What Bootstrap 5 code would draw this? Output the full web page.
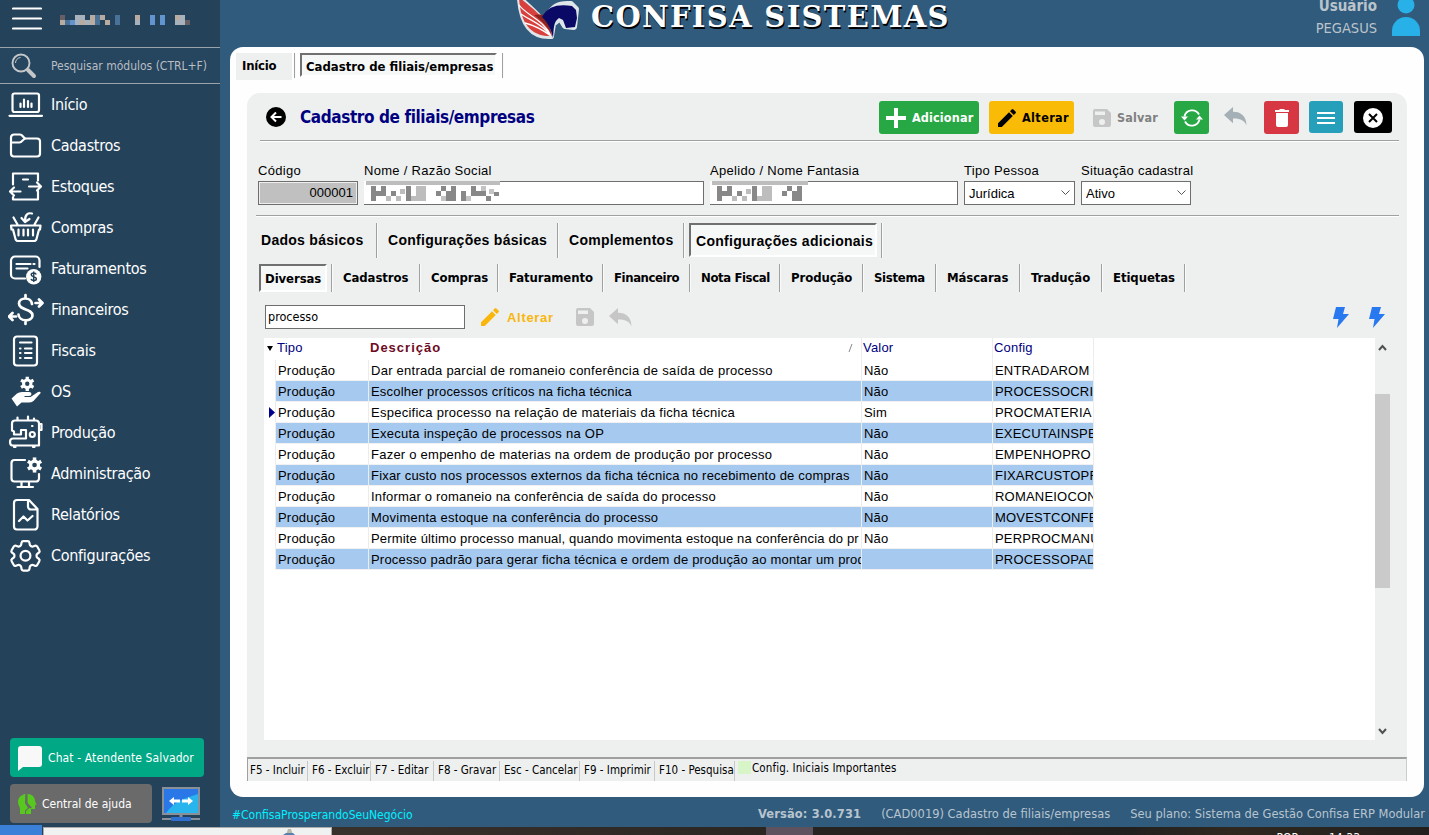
<!DOCTYPE html>
<html lang="pt-BR">
<head>
<meta charset="utf-8">
<meta name="viewport" content="width=device-width, initial-scale=1">
<title>Confisa Sistemas</title>
<link rel="stylesheet" href="https://cdn.jsdelivr.net/npm/bootstrap@5.3.0/dist/css/bootstrap.min.css">
<style>
:root{--tahoma:"DejaVu Sans Condensed","DejaVu Sans",sans-serif;--sans:"Liberation Sans",sans-serif}
body{margin:0;width:1429px;height:835px;overflow:hidden;background:#305b7d;font-family:var(--tahoma);font-stretch:condensed;font-size:12px;line-height:1;color:#000}
svg{display:block;flex:none}
.ln{fill:none;stroke:currentColor;stroke-width:2.2;stroke-linecap:round;stroke-linejoin:round}
.sans{font-family:var(--sans)}
.txt{white-space:nowrap}
/* sidebar */
.side{width:220px;height:835px;background:#24425a;color:#fff}
.side-top{height:48px;border-bottom:1px solid #9aa3a9;padding:2px 0 0 12px}
.side-search{height:36px;border-bottom:1px solid #9aa3a9;color:#b9bec3;padding-left:11px;background:#26455f;font-size:12px}
.side-item{height:41px;padding-left:8px;font-size:16px;letter-spacing:-.3px}
.side-item svg{margin-right:7px}
.side-item span{padding-top:1px}
.blurred-name{margin:13px 0 0 18px}
.side-foot{margin-bottom:12px}
.chat{width:194px;height:39px;margin-left:10px;background:#00a886;border-radius:4px;padding:1px 0 0 8px;font-size:12px;letter-spacing:.12px}
.help{width:142px;height:39px;background:#6a6a6a;border-radius:4px;padding:1px 0 0 8px;font-size:12px}
/* header and footer */
.top{height:47px}
.brand{font-family:"DejaVu Serif",serif;font-stretch:normal;font-weight:bold;font-size:29px;letter-spacing:1.350px;color:#fff;text-shadow:1px 2px 0 #000;margin:3px 0 0 9px}
.foot{height:30px;color:#b8c4ce;font-size:12.750px;padding:5px 4px 0 2px}
/* sheet */
.sheet{margin:0 5px 0 10px;height:750px;background:#fefefe;border-radius:13px;padding:6px 17px 0 6px}
.pane{margin:13px 0 0 11px;height:688px;background:#eef0f0;border-radius:13px 13px 0 0}
.rule{height:2px;background:#a0a0a0;border-bottom:1px solid #fff}
.vs{width:2px;flex:none;background:#a0a0a0;border-right:1px solid #fafafa}
.tabx{font-weight:bold;flex:none;white-space:nowrap}
.tab-on{border:2px solid #fff;border-top-color:#707070;border-left-color:#707070;background:#f6f7f7}
.page-title{color:#000080;font-size:17px;letter-spacing:-.4px;margin:8px 0 0 14px}
.act{border-radius:3px;font-weight:bold;font-size:12.500px;flex:none;height:33px;letter-spacing:.15px;padding-top:1px}
.fld{border:1px solid #6e6e6e;height:24px;background:#fff;font-size:13px;padding:0 4px}
.lab{font-size:13px;height:17px;display:block;letter-spacing:.3px;white-space:nowrap}
.t1{margin:6px 0 0 14px;height:35px;font-size:14px;letter-spacing:.28px}
.t1 .tabx{padding:10px 0 0 10px}
.t2{margin:6px 0 0 12px;height:28px;font-size:13px;letter-spacing:-.08px}
.t2 .tabx{padding:7px 0 0 10px}
/* grid */
.gridbox{margin:9px 16px 0 17px;height:402px;background:#fff}
.dg{table-layout:fixed;border-collapse:separate;border-spacing:0;width:830px;font-family:var(--sans);font-size:13px;letter-spacing:.2px}
.dg td,.dg th{padding:0 0 0 2px;height:21px;white-space:nowrap;overflow:hidden;border-right:1px solid #ececec;border-bottom:1px solid #f1f1f1}
.dg th{height:22px;font-weight:normal;color:#000080;padding:0 0 2px 1px;border-bottom-color:#fff}
.dg th b{color:#6e0a1e;letter-spacing:1px}
.dg tr>:first-child{padding:0}
.dg tbody tr:nth-child(even) td:not(:first-child){background:#a6c9ef}
.dg td:first-child{border-bottom-color:#fff}
.dg thead th:nth-child(-n+2){border-right-color:#fff}
.sb{width:16px;background:#eef0f0;padding:6px 0 5px}
.thumb{width:15px;height:194px;background:#cacaca;margin-top:43px}
.status{border-top:2px solid #a0a0a0;border-left:1px solid #a0a0a0;border-right:1px solid #ccc;height:24px;font-size:11.500px}
.status .cellx{border-right:1px solid #c8c8c8;margin-top:2px;flex:none;overflow:hidden;white-space:nowrap;padding:4px 0 0 4px}
.taskbar{left:0;bottom:0;width:1429px;height:10px;overflow:hidden}
.tray{height:8px;color:#fff;font-size:12px;padding:5px 69px 0 0;gap:30px;background:linear-gradient(90deg,#38302b 0,#2c2622 434px,#5d525d 434px,#5d525d 481px,#262321 481px,#22201f 800px,#30281f 900px,#221f1e)}
</style>
</head>
<body class="d-flex position-relative">
<svg width="0" height="0" class="position-absolute">
<symbol id="cog" viewBox="0 0 14 14"><path d="M7 0v14M1 3.500l12 7M1 10.500l12-7" stroke="#fff" stroke-width="3.200"/><circle cx="7" cy="7" r="5" fill="#fff"/><circle cx="7" cy="7" r="2.100" fill="#24425a"/></symbol>
<symbol id="undo" viewBox="0 0 23 19"><path d="M9 0v4.800c8.500 0 13 4.500 13.500 13.500-2-4.800-6-7-13.500-6.800v4.800L0 8z" fill="currentColor"/></symbol>
<symbol id="disk" viewBox="0 0 18 18"><path fill-rule="evenodd" d="M2 0h12l4 4v12a2 2 0 0 1-2 2H2a2 2 0 0 1-2-2V2a2 2 0 0 1 2-2zm0 2.500v3.500h10V2.500zM9 10a3 3 0 1 0 0 6 3 3 0 0 0 0-6z" fill="currentColor"/></symbol>
<symbol id="pencil" viewBox="0 0 18 18"><path d="M0 14.200 11 3.200l3.800 3.800-11 11H0zM12 2.200 13.700.5a1.200 1.200 0 0 1 1.700 0l2.100 2.100a1.200 1.200 0 0 1 0 1.700L15.800 6z" fill="currentColor"/></symbol>
<symbol id="bolt" viewBox="0 0 16 21"><path d="M3 0h9l-2 7h6L4 21l1.500-9H0z" fill="#2878f0"/></symbol>
</svg>

<nav class="side d-flex flex-column flex-shrink-0">
  <div class="side-top d-flex align-items-start">
    <svg width="30" height="34" viewBox="0 0 30 34"><path class="ln" d="M1 6.500h28M1 16.500h28M1 26.500h28"/></svg>
    <svg class="blurred-name" width="132" height="10"><path fill="#675f66" d="M0 0h5v5H0zM125 5h5v5h-5z"/><path fill="#b9ab9f" d="M0 5h5v5H0zM20 5h10v5H20zM30 0h5v10h-5zM40 0h5v5h-5zM45 5h5v5h-5zM75 0h5v5h-5zM115 0h5v5h-5z"/><path fill="#4a7298" d="M5 5h5v5H5zM35 0h5v10h-5zM55 0h5v10h-5z"/><path fill="#6295cf" d="M10 5h5v5h-5zM90 0h5v10h-5zM100 0h5v10h-5z"/><path fill="#a8b2bc" d="M15 0h10v5H15zM15 5h5v5h-5zM25 5h5v5h-5zM75 5h5v5h-5zM115 5h5v5h-5zM120 0h5v10h-5z"/></svg>
  </div>
  <div class="side-search d-flex align-items-center">
    <svg width="26" height="26" viewBox="0 0 26 26" fill="none" stroke="#c4c7c9"><circle cx="10" cy="10" r="8.500" stroke-width="1.900"/><path d="M4.500 10a5.500 5.500 0 0 1 5-5.500" stroke-width="1"/><path d="m17 17 6 6" stroke-width="4" stroke-linecap="round"/></svg>
    <span class="txt" style="margin-left:14px">Pesquisar módulos (CTRL+F)</span>
  </div>
  <div class="side-item d-flex align-items-center"><svg width="36" height="36"><g class="ln"><rect x="4.500" y="6.500" width="26.500" height="18.500" rx="2"/><path d="M1.500 28.800h32.500"/><path d="M12.500 20v-3.500M16 20v-7.500M20 20v-6M23.500 20v-3.500"/></g></svg><span>Início</span></div>
  <div class="side-item d-flex align-items-center"><svg width="36" height="36"><path class="ln" d="M3 9.500a3 3 0 0 1 3-3h6c3 0 3 4 6 4h11a3 3 0 0 1 3 3v12a3 3 0 0 1-3 3H6a3 3 0 0 1-3-3zM3.500 14.500h8c3 0 3-4 6.500-4"/></svg><span>Cadastros</span></div>
  <div class="side-item d-flex align-items-center"><svg width="36" height="36"><path class="ln" d="M5 15.500v-11h25v7M30 22v8.500H5V28M15 10.500h5M21 17.500h11.500M29 13.500l4 4-4 4M12.500 22.500H2.500M6 18.500l-4 4 4 4"/></svg><span>Estoques</span></div>
  <div class="side-item d-flex align-items-center"><svg width="36" height="36"><path class="ln" d="M3 15.500h29.500M3 15.500l.5 4 1.500 0 2.500 9.500q.5 2 2.500 2h16q2 0 2.500-2L31 19.500h1l.5-4M5.500 7.500l4 7M30.500 7.500l-4 7M10.500 19.500v6M15.500 19.500v6M20 19.500v6M25 19.500v6M24 3.500c-4-1-7 1-7 7M13.500 8l3.500 4 4.500-3"/></svg><span>Compras</span></div>
  <div class="side-item d-flex align-items-center"><svg width="36" height="36"><path class="ln" d="M17 27.500H7a4 4 0 0 1-4-4V9.500a4 4 0 0 1 4-4h20.500a4 4 0 0 1 4 4V16M8.500 13h14M8.500 17.500h11M25.500 13h1"/><circle cx="25.700" cy="25.700" r="7.700" fill="#fff"/><path d="M28.200 23.500c-.6-2-5-2-5 .2 0 2.500 5.200 1.500 5.200 4.100 0 2.400-4.800 2.300-5.400.1M25.700 20.500v10.500" fill="none" stroke="#24425a" stroke-width="1.500"/></svg><span>Faturamentos</span></div>
  <div class="side-item d-flex align-items-center"><svg width="36" height="36"><path class="ln" style="stroke-width:2.700" d="M24 12c-.7-7.500-13-7-13-.5 0 7 13.500 5 13.500 12 0 6.500-13.500 6.500-14-1M17.500 3v3M17.500 29.500v2.500M27.500 11h6M31 7.500l3.500 3.500-3.500 3.500M8 24.500H1.500M4.500 21l-3.500 3.500L4.500 28"/></svg><span>Financeiros</span></div>
  <div class="side-item d-flex align-items-center"><svg width="36" height="36"><path class="ln" d="M9 3.500h17a3 3 0 0 1 3 3v23a3 3 0 0 1-3 3H9a3 3 0 0 1-3-3v-23a3 3 0 0 1 3-3zM12 9.500h11.500M17 15.500h6.500M17 20h6.500M17 25h6.500M12 15.500h.5M12 20h.5M12 25h.5"/></svg><span>Fiscais</span></div>
  <div class="side-item d-flex align-items-center"><svg width="36" height="36"><use href="#cog" x="12" y="2.500" width="14.500" height="14.500"/><path fill="#fff" d="M3.500 24.500 9 19.500q2-1.500 5-1.500h7q2.500 0 2.500 2t-2.500 2h-4.500v1h6l7.500-5q2.500-1 2.700 1L25.500 27q-2 1.500-5 1.500h-7L9 32.500z"/></svg><span>OS</span></div>
  <div class="side-item d-flex align-items-center"><svg width="36" height="36"><path class="ln" d="M7 5.500h21a3 3 0 0 1 3 3v22H4.500q-2.500 0-2.500-3.500t3-3.500h13v-8.500h-5v4.500H6v-3L4 15.500v-7a3 3 0 0 1 3-3zM9.500 5V2.500M20 5V1.500M26 5V3.500M31 9h2.500v6H31M24 11h.5M6 32h1.500M25 32h1.500"/><circle class="ln" cx="24.300" cy="19.500" r="2.500"/></svg><span>Produção</span></div>
  <div class="side-item d-flex align-items-center"><svg width="36" height="36"><path class="ln" d="M17 4H6.500A3 3 0 0 0 3.500 7v15.500a3 3 0 0 0 3 3H28a3 3 0 0 0 3-3V18M13.500 26v4.500M21 26v4.500M9.500 31h15.500"/><use href="#cog" x="18.800" y="1.300" width="15.500" height="15.500"/></svg><span>Administração</span></div>
  <div class="side-item d-flex align-items-center"><svg width="36" height="36"><path class="ln" d="M9 3h12l8.500 9v17.500a3 3 0 0 1-3 3H9a3 3 0 0 1-3-3V6a3 3 0 0 1 3-3zM20 3.500v6a3 3 0 0 0 3 3h6M11 24l4.500-4.500 4 4L24.500 19"/></svg><span>Relatórios</span></div>
  <div class="side-item d-flex align-items-center"><svg width="36" height="36" viewBox="0 0 36 36"><g transform="translate(-2.200 -1.900) scale(1.640)" fill="none" stroke="#fff" stroke-width="1.350"><path d="M9.594 3.940c.09-.542.56-.94 1.110-.94h2.593c.55 0 1.020.398 1.110.94l.213 1.281c.063.374.313.686.645.87.074.04.147.083.22.127.325.196.72.257 1.075.124l1.217-.456a1.125 1.125 0 0 1 1.370.49l1.296 2.247a1.125 1.125 0 0 1-.26 1.431l-1.003.827c-.293.241-.438.613-.43.992a7.723 7.723 0 0 1 0 .255c-.008.378.137.75.43.991l1.004.827c.424.35.534.955.26 1.430l-1.298 2.247a1.125 1.125 0 0 1-1.369.491l-1.217-.456c-.355-.133-.75-.072-1.076.124a6.470 6.470 0 0 1-.22.128c-.331.183-.581.495-.644.869l-.213 1.281c-.09.543-.56.94-1.110.94h-2.594c-.55 0-1.019-.398-1.110-.94l-.213-1.281c-.062-.374-.312-.686-.644-.87a6.520 6.520 0 0 1-.22-.127c-.325-.196-.72-.257-1.076-.124l-1.217.456a1.125 1.125 0 0 1-1.369-.49l-1.297-2.247a1.125 1.125 0 0 1 .26-1.431l1.004-.827c.292-.24.437-.613.43-.991a6.932 6.932 0 0 1 0-.255c.007-.38-.138-.751-.43-.992l-1.004-.827a1.125 1.125 0 0 1-.26-1.430l1.297-2.247a1.125 1.125 0 0 1 1.370-.491l1.216.456c.356.133.751.072 1.076-.124.072-.044.146-.086.22-.128.332-.183.582-.495.644-.869z"/><circle cx="12" cy="12" r="3"/></g></svg><span>Configurações</span></div>

  <div class="side-foot mt-auto">
    <div class="chat d-flex align-items-center"><svg width="24" height="26"><path d="M3 1h18a3 3 0 0 1 3 3v15a3 3 0 0 1-3 3H5l-5 4V4a3 3 0 0 1 3-3z" fill="#f8f8f8"/></svg><span class="txt" style="margin-left:6px">Chat - Atendente Salvador</span></div>
    <div class="d-flex" style="margin:7px 0 0 10px">
      <div class="help d-flex align-items-center"><svg width="19" height="21"><path d="M7.500 0C3 .5 0 4 0 8c0 3 2 5 2 7v5h5v-3.500l3-2.500-3-5z" fill="#56c81e"/><path d="M9.500 0C15 0 17 4 17 7l1.500 4H17v4h-4v5H8v-3l3.500-3h2L9.500 9z" fill="#56c81e"/><path d="M8.300 1v8l5 5" fill="none" stroke="#6a6a6a" stroke-width="1.600"/></svg><span class="txt" style="margin-left:5px">Central de ajuda</span></div>
      <svg style="margin:2px 0 0 10px" width="38" height="36"><path fill="#8a9097" d="M0 1h38v28H0zM17.500 29h3v3h-3zM0 32h38v2H0z"/><path fill="#2a78e8" d="M2 3h34v24H2z"/><path fill="#28b4ec" d="M4 27C12 15 24 12 36 8v19z"/><rect x="9" y="31" width="20" height="4" rx="1" fill="#2f6fd0"/><path fill="#fff" d="m7 15 5-4v2.500h6v3h-6V19zM31 15l-5-4v2.500h-6v3h6V19z"/></svg>
    </div>
  </div>
</nav>

<main class="flex-grow-1 d-flex flex-column">
  <header class="top d-flex">
    <svg width="68" height="44" style="margin-left:294px" viewBox="0 0 68 44"><g stroke="#dfe6ea" stroke-width="6" stroke-linejoin="round" fill="#dfe6ea"><path d="M6-1C8 24 17 37 37 36c-2-10-14-22-31-37zM37 36l2-12 7-6 5 8 9 1 2-18-5-5c-14-1-19 4-24 13z"/></g><path fill="#d8403e" d="M5-3c1 25 11 40 33 39C37 23 23 12 5-3z"/><path fill="#8a2320" d="M20 15c5-1 10-1 13 2l5 19C35 28 28 21 20 15z"/><path d="M5 5c7 10 25 15 32 31M7 14c8 6 22 10 30 22M11 23c8 2 18 7 26 13" fill="none" stroke="#fff" stroke-width="1.300"/><path fill="#0a0a66" d="M28 17C34 6 44 4 58 6l4 4 1 8-2 9-9 1-3-8-4-2c-6 4-5 11-6 20-2-9-5-15-11-21z"/></svg>
    <div class="brand txt">CONFISA SISTEMAS</div>
    <div class="ms-auto text-end" style="color:#bcc4cb;margin-right:15px"><div class="fw-bold" style="font-size:15px;margin-top:-1px">Usuário</div><div style="font-size:14.500px;margin-top:7px">PEGASUS</div></div>
    <svg width="28" height="37" style="margin-right:9px"><circle cx="14" cy="5" r="8.500" fill="#28b0e8"/><path d="M0 36V31a14 14 0 0 1 28 0v5z" fill="#28b0e8"/></svg>
  </header>

  <section class="sheet">
    <div class="d-flex" style="height:27px;font-size:13px">
      <div class="tabx" style="width:56px;background:#eef0f0;padding:6px 0 0 6px;letter-spacing:-.2px">Início</div>
      <div class="vs" style="height:25px;margin:0 4px 0 2px"></div>
      <div class="tabx tab-on" style="width:197px;height:24px;padding:5px 0 0 4px">Cadastro de filiais/empresas</div>
      <div class="vs" style="height:25px;margin-left:5px"></div>
    </div>
    <div class="pane d-flex flex-column">
      <div class="d-flex" style="padding:8px 15px 0 19px;height:47px">
        <svg width="20" height="20" style="margin-top:6px"><circle cx="10" cy="10" r="10"/><path d="M15.500 10H5.500M10 5.500L5.500 10l4.500 4.500" fill="none" stroke="#fff" stroke-width="2"/></svg>
        <div class="page-title fw-bold txt">Cadastro de filiais/empresas</div>
        <div class="act d-flex align-items-center text-white ms-auto" style="width:100px;background:#28a845;padding-left:7px"><svg width="20" height="20"><path d="M10 0v20M0 10h20" stroke="#fff" stroke-width="4"/></svg><span style="margin-left:6px">Adicionar</span></div>
        <div class="act d-flex align-items-center" style="width:85px;background:#f9bb06;margin-left:10px;padding-left:9px"><svg width="18" height="18"><use href="#pencil"/></svg><span style="margin-left:6px;letter-spacing:.4px">Alterar</span></div>
        <div class="act d-flex align-items-center" style="width:66px;margin-left:19px;color:#808080"><svg width="18" height="18" style="color:#c6c6c6"><use href="#disk"/></svg><span style="margin-left:6px">Salvar</span></div>
        <div class="act d-flex align-items-center justify-content-center" style="width:35px;background:#28a845;margin-left:15px"><svg width="22" height="20"><path d="M3.500 8.500A7.800 7.800 0 0 1 18 6.500M18.500 11.500A7.800 7.800 0 0 1 4 13.500" fill="none" stroke="#fff" stroke-width="1.800"/><path d="M0 8.500h7L3.500 12.500zM15 11.500h7L18.500 7.500z" fill="#fff"/></svg></div>
        <svg width="23" height="19" style="margin:6px 17px 0 15px;color:#a5afb6"><use href="#undo"/></svg>
        <div class="act d-flex align-items-center justify-content-center" style="width:35px;background:#d73743"><svg width="14" height="18"><path d="M0 1h4l1-1h4l1 1h4v2H0zM1 4h12v12a2 2 0 0 1-2 2H3a2 2 0 0 1-2-2z" fill="#fff"/></svg></div>
        <div class="act d-flex align-items-center justify-content-center" style="width:34px;height:32px;background:#26a0ba;margin-left:10px"><svg width="18" height="14"><path d="M0 2h18M0 7h18M0 12h18" stroke="#fff" stroke-width="1.800"/></svg></div>
        <div class="act d-flex align-items-center justify-content-center" style="width:38px;height:32px;background:#000;margin-left:11px"><svg width="20" height="20"><circle cx="10" cy="10" r="10" fill="#fff"/><path d="m6 6 8 8M14 6l-8 8" stroke="#000" stroke-width="2"/></svg></div>
      </div>
      <div class="rule" style="margin:0 8px 0 13px"></div>
      <div class="d-flex sans" style="padding:22px 0 0 11px;height:73px;gap:6px">
        <div style="width:100px"><span class="lab">Código</span><div class="fld text-end" style="background:#c0c0c0;padding:4px 4px 0;box-shadow:inset 0 0 0 1px #eee">000001</div></div>
        <div style="width:340px"><span class="lab">Nome / Razão Social</span><div class="fld"><svg width="136" height="23" style="margin:-1px 0 0 -5px"><path fill="#fff" d="M0 0h136v24H0z"/><path fill="#bdbdbd" d="M2 0h134v4H2z"/><g id="mz"><path fill="#888" d="M7 5h5v15H7zM12 10h5v5h-5zM17 5h5v10h-5zM27 10h5v5h-5zM42 5h5v15h-5z"/><path fill="#bdbdbd" d="M22 15h5v5h-5zM32 15h5v5h-5zM36 8h5v5h-5zM52 5h10v15H47v-5h5z"/></g><path fill="#888" d="M72 10h5v5h-5zM77 5h5v5h-5zM82 10h5v10h-5zM87 5h5v15h-5zM97 10h5v10h-5zM107 5h5v10h-5zM112 10h10v5h-10zM122 15h5v5h-5zM130 11h5v4h-5z"/><path fill="#c4c4c4" d="M77 15h5v5h-5zM102 15h5v5h-5zM117 5h5v5h-5zM125 8h5v5h-5z"/></svg></div></div>
        <div style="width:248px"><span class="lab">Apelido / Nome Fantasia</span><div class="fld"><svg width="98" height="23" style="margin:-1px 0 0 -5px"><path fill="#fff" d="M0 0h98v24H0z"/><path fill="#bdbdbd" d="M2 0h96v4H2z"/><use href="#mz"/><path fill="#888" d="M72 10h5v5h-5zM77 5h5v5h-5zM82 10h5v10h-5zM87 5h5v15h-5z"/></svg></div></div>
        <div style="width:111px"><span class="lab">Tipo Pessoa</span><div class="fld d-flex align-items-center justify-content-between"><span>Jurídica</span><svg width="9" height="6"><path d="m.5.5 4 4 4-4" fill="none" stroke="#555"/></svg></div></div>
        <div style="width:110px"><span class="lab">Situação cadastral</span><div class="fld d-flex align-items-center justify-content-between"><span>Ativo</span><svg width="9" height="6"><path d="m.5.5 4 4 4-4" fill="none" stroke="#555"/></svg></div></div>
      </div>
      <div class="rule" style="margin:0 8px 0 9px"></div>
      <div class="d-flex sans t1">
        <div class="tabx" style="width:115px;padding-left:0">Dados básicos</div><div class="vs"></div>
        <div class="tabx" style="width:179px">Configurações básicas</div><div class="vs"></div>
        <div class="tabx" style="width:124px">Complementos</div><div class="vs"></div>
        <div class="tabx tab-on" style="width:188px;height:34px;margin:0 4px;padding:9px 0 0 5px">Configurações adicionais</div><div class="vs"></div>
      </div>
      <div class="d-flex t2">
        <div class="tabx tab-on" style="width:68px;padding:6px 0 0 4px;margin-right:4px">Diversas</div><div class="vs"></div>
        <div class="tabx" style="width:86px">Cadastros</div><div class="vs"></div>
        <div class="tabx" style="width:76px">Compras</div><div class="vs"></div>
        <div class="tabx" style="width:103px">Faturamento</div><div class="vs"></div>
        <div class="tabx" style="width:85px;letter-spacing:-.4px">Financeiro</div><div class="vs"></div>
        <div class="tabx" style="width:88px;letter-spacing:-.4px">Nota Fiscal</div><div class="vs"></div>
        <div class="tabx" style="width:81px">Produção</div><div class="vs"></div>
        <div class="tabx" style="width:71px;letter-spacing:-.3px">Sistema</div><div class="vs"></div>
        <div class="tabx" style="width:82px">Máscaras</div><div class="vs"></div>
        <div class="tabx" style="width:80px">Tradução</div><div class="vs"></div>
        <div class="tabx" style="width:81px">Etiquetas</div><div class="vs"></div>
      </div>
      <div class="d-flex align-items-center" style="margin:13px 22px 0 18px;height:24px">
        <div class="fld d-flex align-items-center" style="width:200px;padding-left:2px;font-size:12.500px">processo</div>
        <svg width="18" height="18" style="margin-left:16px;color:#f9b60c"><use href="#pencil"/></svg>
        <span class="sans fw-bold" style="color:#f9b60c;font-size:13px;letter-spacing:.7px;margin-left:8px">Alterar</span>
        <svg width="18" height="18" style="margin-left:22px;color:#c6c6c6"><use href="#disk"/></svg>
        <svg width="23" height="19" style="margin-left:15px;color:#c6c6c6"><use href="#undo"/></svg>
        <svg class="ms-auto" width="16" height="21"><use href="#bolt"/></svg>
        <svg width="16" height="21" style="margin-left:20px"><use href="#bolt"/></svg>
      </div>
      <div class="gridbox d-flex justify-content-between">
        <table class="dg align-self-start">
          <colgroup><col style="width:12px"><col style="width:93px"><col style="width:493px"><col style="width:131px"><col style="width:101px"></colgroup>
          <thead><tr><th><svg width="6" height="5" style="margin-left:3px"><path d="M0 0h6L3 5z"/></svg></th><th>Tipo</th><th><div class="d-flex justify-content-between"><b>Descrição</b><svg width="6" height="9" style="margin:3px 7px 0"><path d="M1 8 4 0" stroke="#888"/></svg></div></th><th>Valor</th><th>Config</th></tr></thead>
          <tbody>
            <tr><td></td><td>Produção</td><td style="letter-spacing:.26px">Dar entrada parcial de romaneio conferência de saída de processo</td><td>Não</td><td>ENTRADAROM</td></tr>
            <tr><td></td><td>Produção</td><td>Escolher processos críticos na ficha técnica</td><td>Não</td><td>PROCESSOCRIT</td></tr>
            <tr><td><svg width="7" height="11" style="margin-left:5px"><path d="M0 0v11l6-5.500z" fill="#000090"/></svg></td><td>Produção</td><td style="letter-spacing:.26px">Especifica processo na relação de materiais da ficha técnica</td><td>Sim</td><td>PROCMATERIA</td></tr>
            <tr><td></td><td>Produção</td><td style="letter-spacing:.26px">Executa inspeção de processos na OP</td><td>Não</td><td>EXECUTAINSPE</td></tr>
            <tr><td></td><td>Produção</td><td style="letter-spacing:.24px">Fazer o empenho de materias na ordem de produção por processo</td><td>Não</td><td>EMPENHOPRO</td></tr>
            <tr><td></td><td>Produção</td><td>Fixar custo nos processos externos da ficha técnica no recebimento de compras</td><td>Não</td><td>FIXARCUSTOPR</td></tr>
            <tr><td></td><td>Produção</td><td>Informar o romaneio na conferência de saída do processo</td><td>Não</td><td>ROMANEIOCON</td></tr>
            <tr><td></td><td>Produção</td><td style="letter-spacing:.24px">Movimenta estoque na conferência do processo</td><td>Não</td><td>MOVESTCONFE</td></tr>
            <tr><td></td><td>Produção</td><td style="letter-spacing:.16px">Permite último processo manual, quando movimenta estoque na conferência do pr</td><td>Não</td><td>PERPROCMANU</td></tr>
            <tr><td></td><td>Produção</td><td>Processo padrão para gerar ficha técnica e ordem de produção ao montar um prod</td><td></td><td>PROCESSOPAD</td></tr>
          </tbody>
        </table>
        <div class="sb d-flex flex-column"><svg width="15" height="7"><path d="m4 6 3.500-4L11 6" fill="none" stroke="#505050" stroke-width="2"/></svg><div class="thumb"></div><svg class="mt-auto" width="15" height="7"><path d="m4 1 3.500 4L11 1" fill="none" stroke="#505050" stroke-width="2"/></svg></div>
      </div>
      <div class="status d-flex mt-auto">
        <div class="cellx" style="width:60px;padding-left:2px">F5 - Incluir</div>
        <div class="cellx" style="width:63px">F6 - Excluir</div>
        <div class="cellx" style="width:63px">F7 - Editar</div>
        <div class="cellx" style="width:66px">F8 - Gravar</div>
        <div class="cellx" style="width:80px">Esc - Cancelar</div>
        <div class="cellx" style="width:75px">F9 - Imprimir</div>
        <div class="cellx" style="width:80px">F10 - Pesquisa</div>
        <div style="width:13px;height:13px;background:#d8f5c8;margin:2px 1px 0 3px"></div>
        <div class="txt" style="padding-top:4px;letter-spacing:.1px">Config. Iniciais Importantes</div>
      </div>
    </div>
  </section>

  <footer class="foot d-flex align-items-center">
    <span class="txt" style="color:#00f0ff;margin-left:10px;font-size:12px">#ConfisaProsperandoSeuNegócio</span>
    <b class="txt ms-auto" style="letter-spacing:.12px">Versão: 3.0.731</b>
    <span class="txt" style="margin-left:20px">(CAD0019) Cadastro de filiais/empresas</span>
    <span class="txt" style="margin-left:20px">Seu plano: Sistema de Gestão Confisa ERP Modular</span>
  </footer>
</main>

<div class="taskbar position-absolute d-flex align-items-end">
  <div style="width:42px;height:10px;background:#3a80d8"></div>
  <div style="width:289px;height:8px;background:#f0f1f1;border:1px solid #aaa;border-bottom:0;margin-left:1px"><svg width="12" height="7" style="margin-left:239px"><path d="M3 7 5 1h3l2 6z" fill="#b9b9a8"/><path d="M0 7l3-2h7l2 2z" fill="#5580b0"/></svg></div>
  <div class="tray flex-grow-1 d-flex justify-content-end"><span>POR</span><span>14:33</span></div>
</div>
<script src="https://cdn.jsdelivr.net/npm/bootstrap@5.3.0/dist/js/bootstrap.bundle.min.js"></script>
</body>
</html>
